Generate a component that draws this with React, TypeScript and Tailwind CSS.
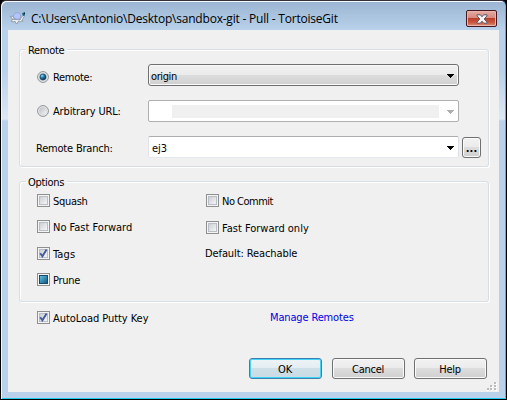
import React from 'react';

const ui = "font-['DejaVu_Sans_Condensed','DejaVu_Sans',sans-serif] [font-stretch:condensed] text-[11px] leading-[13px] whitespace-nowrap text-black";

function Text({ children, className = '' }: { children: React.ReactNode; className?: string }) {
  return <span className={`${ui} ${className}`}>{children}</span>;
}

function Radio({ checked = false }: { checked?: boolean }) {
  return (
    <svg width="12" height="12" viewBox="0 0 12 12" className="shrink-0">
      <defs>
        <linearGradient id="radioFace" x1="0" y1="0" x2="1" y2="1">
          <stop offset="0" stopColor="#b8bcc2" />
          <stop offset="1" stopColor="#f8f8f8" />
        </linearGradient>
        <radialGradient id="radioDot" cx=".35" cy=".3" r=".7">
          <stop offset="0" stopColor="#8fe0fa" />
          <stop offset=".45" stopColor="#1f83ad" />
          <stop offset="1" stopColor="#0b2c48" />
        </radialGradient>
      </defs>
      <circle cx="6" cy="6" r="5.4" fill="#f4f4f4" stroke="#8b8d8f" />
      <circle cx="6" cy="6" r="3.9" fill="url(#radioFace)" stroke={checked ? '#a5b9c8' : '#d0d2d5'} strokeWidth=".6" />
      {checked && <circle cx="6" cy="6" r="3" fill="url(#radioDot)" stroke="#153e5e" strokeWidth=".6" />}
    </svg>
  );
}

function Check({ state = 'off' }: { state?: 'off' | 'on' | 'mixed' }) {
  return (
    <span className="flex size-[13px] shrink-0 items-center justify-center border border-[#8e8f8f] bg-[#f4f4f4]">
      {state === 'mixed' ? (
        <span className="size-[9px] border border-[#164a6c] bg-linear-to-br from-[#5fc0e4] to-[#125a83]" />
      ) : (
        <span className="flex size-[9px] border border-[#b9bec6] bg-linear-to-br from-[#cbcfd5] to-[#f6f6f6]">
          {state === 'on' && (
            <svg width="9" height="9" viewBox="0 0 9 9" className="-m-px shrink-0">
              <path d="M1.2 4.2 L3.4 7.2 L7.6 .6" fill="none" stroke="#4359a0" strokeWidth="1.9" />
            </svg>
          )}
        </span>
      )}
    </span>
  );
}

function Arrow({ color }: { color: string }) {
  return (
    <svg width="7" height="4" viewBox="0 0 7 4" shapeRendering="crispEdges" className="mt-px shrink-0">
      <path d="M0 0h7v1H6v1H5v1H4v1H3V3H2V2H1V1H0z" fill={color} />
    </svg>
  );
}

function Option({ state, label, className = '' }: { state?: 'off' | 'on' | 'mixed'; label: string; className?: string }) {
  return (
    <label className="flex h-[13px] items-start gap-[3px]">
      <Check state={state} />
      <Text className={`mt-px ${className}`}>{label}</Text>
    </label>
  );
}

function Group({ title, className, children }: { title: string; className: string; children: React.ReactNode }) {
  return (
    <section className={`flex w-[470px] flex-col rounded-[3px] border border-[#d5dfe5] shadow-[inset_1px_1px_0_#fff,1px_1px_0_#fff] ${className}`}>
      <span className="-mt-[6px] -mb-px ml-[6px] flex h-[13px] self-start bg-[#f0f0f0] pr-[3px] pl-[2px]">
        <Text className="tracking-[-0.3px]">{title}</Text>
      </span>
      {children}
    </section>
  );
}

function Button({ label, primary = false }: { label: string; primary?: boolean }) {
  return (
    <button
      className={`flex h-[21px] w-[73px] items-center justify-center rounded-[3px] border pt-px pr-px ${
        primary
          ? 'border-[#3c7fb1] bg-[linear-gradient(#eef4f7_0,#e3edf2_48%,#cfdfe7_50%,#c9dbe4_100%)] shadow-[inset_0_0_0_1px_#42d3f7]'
          : 'border-[#707070] bg-[linear-gradient(#f2f2f2_0,#ebebeb_48%,#dddddd_50%,#cfcfcf_100%)] shadow-[inset_0_0_0_1px_#fafafa]'
      }`}
    >
      <Text className="tracking-[-0.25px]">{label}</Text>
    </button>
  );
}

function Turtle() {
  return (
    <svg width="16" height="14" viewBox="0 0 16 14" className="shrink-0">
      <path d="M.4 5.4 2.6 5.2 4 7.6 3 8.6z" fill="#fff" stroke="#76818b" strokeWidth=".7" />
      <path d="M2.4 8.2 1.6 10.6 3.4 10.8 5 10l.6 2.2 1.8.2.6-1.8 2 .2 1-1 1.8.4-.4-1.8L14 5.6V4l-2.4 2L10 9z" fill="#f6f6f6" stroke="#76818b" strokeWidth=".7" />
      <path d="M3.4 5.4C3.4 2.6 5.6 1.4 7.8 1.6 10 1.9 11 3.8 10.6 6.2 9.6 8.8 5.4 9.4 3.4 5.4z" fill="#b4c4fa" stroke="#8194cc" strokeWidth=".6" />
      <path d="M12 2.8 13 1.8l2-.9v3.3L13 4.9z" fill="#1c6580" />
      <path d="M13.8 2.4H15" stroke="#071e2b" strokeWidth="1" />
    </svg>
  );
}

function Grip() {
  const dots = [[8, 0], [4, 3], [8, 3], [0, 6], [4, 6], [8, 6]];
  return (
    <svg width="10" height="9" viewBox="0 0 10 9" shapeRendering="crispEdges">
      {dots.map(([x, y]) => (
        <g key={`${x}-${y}`}>
          <rect x={x} y={y + 1} width="2" height="2" fill="#fff" />
          <rect x={x - 1 < 0 ? 0 : x - 1} y={y} width="2" height="2" fill="#bcbcbc" />
        </g>
      ))}
    </svg>
  );
}

export default function App() {
  return (
    <div className="h-[400px] w-[507px] bg-black">
      <div className="flex h-[400px] w-[507px] flex-col rounded-t-[6px] border border-t-[#35313a] border-r-black border-b-black border-l-black bg-[linear-gradient(#9ab4d2_0,#b9d1ea_29px,#b9d1ea_70px,#dce8f5_118px,#b9d1ea_120px,#b9d1ea_100%)] pr-[7px] pl-[7px] shadow-[inset_1px_1px_0_#f4f8fc,inset_-1px_-1px_0_#24c8ec]">
        <header className="flex h-[29px] shrink-0 items-start justify-between">
          <div className="flex items-start gap-[5px] pt-[10px] pl-[2px]">
            <Turtle />
            <h1 className="-mt-px font-['Open_Sans','Noto_Sans',sans-serif] text-[12px] leading-[17px] tracking-[-0.21px] whitespace-nowrap text-black">
              C:\Users\Antonio\Desktop\sandbox-git - Pull - TortoiseGit
            </h1>
          </div>
          <button aria-label="Close" className="mt-[9px] mr-[2px] flex h-[17px] w-[31px] items-center justify-center rounded-[2px] border border-[#431822] bg-[linear-gradient(#e5aca3_0,#d6877c_47%,#b8402a_50%,#c9553c_75%,#dc8f7c_100%)] shadow-[inset_0_0_0_1px_#e9b4aa]">
            <svg width="12" height="10" viewBox="0 0 12 10">
              <path d="M1 .8h3.3L6 2.8 7.7.8H11v1L8.2 5 11 8.2v1H7.7L6 7.2 4.3 9.2H1v-1L3.8 5 1 1.8z" fill="#f5f5f5" stroke="#555865" strokeWidth="1" />
            </svg>
          </button>
        </header>

        <main className="flex h-[362px] w-[491px] shrink-0 flex-col bg-[#f0f0f0] pl-[11px]">
          <Group title="Remote" className="mt-[19px] h-[118px]">
            <div className="mt-[8px] flex h-[22px] shrink-0 pl-[17px]">
              <label className="mt-[7px] flex h-[12px] w-[111px] items-center gap-[4px]">
                <Radio checked />
                <Text className="tracking-[-0.3px]">Remote:</Text>
              </label>
              <div className="flex h-[22px] w-[311px] items-center justify-between rounded-[3px] border border-[#707070] bg-[linear-gradient(#f2f2f2_0,#ebebeb_48%,#dddddd_50%,#cfcfcf_100%)] pr-[4px] pl-[2px] shadow-[inset_0_0_0_1px_#fafafa]">
                <Text className="mt-[2px] tracking-[-0.4px]">origin</Text>
                <Arrow color="#000" />
              </div>
            </div>
            <div className="mt-[14px] flex h-[22px] shrink-0 pl-[17px]">
              <label className="mt-[5px] flex h-[12px] w-[111px] items-center gap-[4px]">
                <Radio />
                <Text className="tracking-[-0.15px]">Arbitrary URL:</Text>
              </label>
              <div className="flex h-[22px] w-[311px] items-center justify-between rounded-[2px] border border-[#afafaf] bg-white pr-[4px] pl-[23px]">
                <span className="h-[13px] w-[267px] bg-[#f0f0f0]" />
                <Arrow color="#afafaf" />
              </div>
            </div>
            <div className="mt-[14px] flex h-[22px] shrink-0 pl-[16px]">
              <div className="flex w-[112px] items-center pt-[2px]">
                <Text className="tracking-[-0.2px]">Remote Branch:</Text>
              </div>
              <div className="flex h-[22px] w-[311px] items-center justify-between rounded-[2px] border border-t-[#abadb3] border-r-[#dbdfe6] border-b-[#e3e9ef] border-l-[#e2e3ea] bg-white pr-[4px] pl-[3px]">
                <Text className="mt-[2px]">ej3</Text>
                <Arrow color="#000" />
              </div>
              <button className="mt-px ml-[3px] flex h-[21px] w-[19px] items-center justify-center rounded-[3px] border border-[#707070] bg-[linear-gradient(#f2f2f2_0,#ebebeb_48%,#dddddd_50%,#cfcfcf_100%)] shadow-[inset_0_0_0_1px_#fafafa]">
                <Text className="pt-[2px] font-bold">...</Text>
              </button>
            </div>
          </Group>

          <Group title="Options" className="mt-[14px] h-[121px]">
            <div className="mt-[6px] flex pl-[17px]">
              <div className="flex w-[168px] flex-col">
                <Option label="Squash" className="tracking-[-0.3px]" />
                <div className="h-[13px]" />
                <Option label="No Fast Forward" />
                <div className="h-[14px]" />
                <Option state="on" label="Tags" className="tracking-[0.15px]" />
                <div className="h-[13px]" />
                <Option state="mixed" label="Prune" className="tracking-[-0.3px]" />
              </div>
              <div className="flex flex-col pl-px">
                <Option label="No Commit" className="tracking-[-0.5px]" />
                <div className="h-[14px]" />
                <Option label="Fast Forward only" />
                <Text className="mt-[13px] -ml-px tracking-[-0.1px]">Default: Reachable</Text>
              </div>
            </div>
          </Group>

          <div className="mt-[9px] flex h-[13px] shrink-0 items-center pl-[18px]">
            <div className="w-[233px]">
              <Option state="on" label="AutoLoad Putty Key" className="tracking-[-0.06px]" />
            </div>
            <a className={`${ui} tracking-[-0.15px] !text-[#0000e6]`}>Manage Remotes</a>
          </div>

          <div className="mt-[34px] flex gap-[10px] pl-[230px]">
            <Button label="OK" primary />
            <Button label="Cancel" />
            <div className="-ml-px">
              <Button label="Help" />
            </div>
          </div>
          <div className="mt-[3px] mr-[2px] self-end">
            <Grip />
          </div>
        </main>
      </div>
    </div>
  );
}
